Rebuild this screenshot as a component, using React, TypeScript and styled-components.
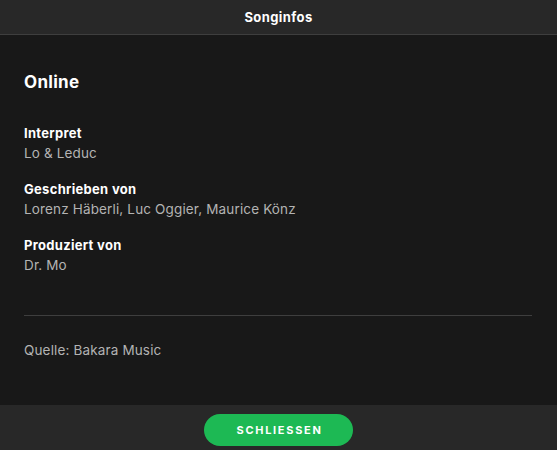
import React from "react";
import styled, { createGlobalStyle } from "styled-components";

const Global = createGlobalStyle`
  html, body { margin: 0; padding: 0; height: 100%; background: #181818; }
  #root { height: 100%; }
  * { box-sizing: border-box; }
`;

const Dialog = styled.div`
  height: 100vh;
  display: flex;
  flex-direction: column;
  font-family: Inter, "Liberation Sans", sans-serif;
  color: #fff;
  background: #181818;
`;

const Header = styled.header`
  height: 35px;
  flex: none;
  display: flex;
  align-items: center;
  justify-content: center;
  background: #282828;
  border-bottom: 1px solid #3e3e3e;
  font-size: 13px;
  font-weight: 700;
  letter-spacing: 0.4px;
`;

const Body = styled.main`
  flex: 1;
  padding: 35px 25px 0 24px;
  display: flex;
  flex-direction: column;
`;

const Title = styled.h1`
  margin: 0 0 29px;
  font-size: 17px;
  line-height: 24px;
  font-weight: 700;
  letter-spacing: 0.3px;
`;

const Credits = styled.dl`
  margin: 0;
  display: flex;
  flex-direction: column;
  gap: 16px;
`;

const Group = styled.div`
  display: flex;
  flex-direction: column;
`;

const Label = styled.dt`
  font-size: 13px;
  line-height: 20px;
  font-weight: 700;
  letter-spacing: 0.3px;
  color: #fff;
`;

const Value = styled.dd`
  margin: 0;
  font-size: 13.5px;
  line-height: 20px;
  letter-spacing: 0.15px;
  color: #b3b3b3;
`;

const Divider = styled.hr`
  margin: 40px 0 24px;
  border: none;
  border-top: 1px solid #3e3e3e;
  height: 0;
`;

const Source = styled.p`
  margin: 0;
  font-size: 13.5px;
  line-height: 20px;
  letter-spacing: 0.15px;
  color: #b3b3b3;
`;

const Footer = styled.footer`
  height: 45px;
  flex: none;
  background: #282828;
  display: flex;
  justify-content: center;
  padding-top: 9px;
`;

const CloseButton = styled.button`
  width: 149px;
  height: 32px;
  border: none;
  border-radius: 16px;
  background: #1db954;
  color: #fff;
  font-family: Inter, "Liberation Sans", sans-serif;
  font-size: 11px;
  font-weight: 700;
  letter-spacing: 1.7px;
  padding: 0 0 0 2px;
  cursor: pointer;
`;

const credits = [
  { label: "Interpret", value: "Lo & Leduc" },
  { label: "Geschrieben von", value: "Lorenz Häberli, Luc Oggier, Maurice Könz" },
  { label: "Produziert von", value: "Dr. Mo" },
];

export default function App() {
  return (
    <>
      <Global />
      <Dialog>
        <Header>Songinfos</Header>
        <Body>
          <Title>Online</Title>
          <Credits>
            {credits.map((c) => (
              <Group key={c.label}>
                <Label>{c.label}</Label>
                <Value>{c.value}</Value>
              </Group>
            ))}
          </Credits>
          <Divider />
          <Source>Quelle: Bakara Music</Source>
        </Body>
        <Footer>
          <CloseButton>SCHLIESSEN</CloseButton>
        </Footer>
      </Dialog>
    </>
  );
}
